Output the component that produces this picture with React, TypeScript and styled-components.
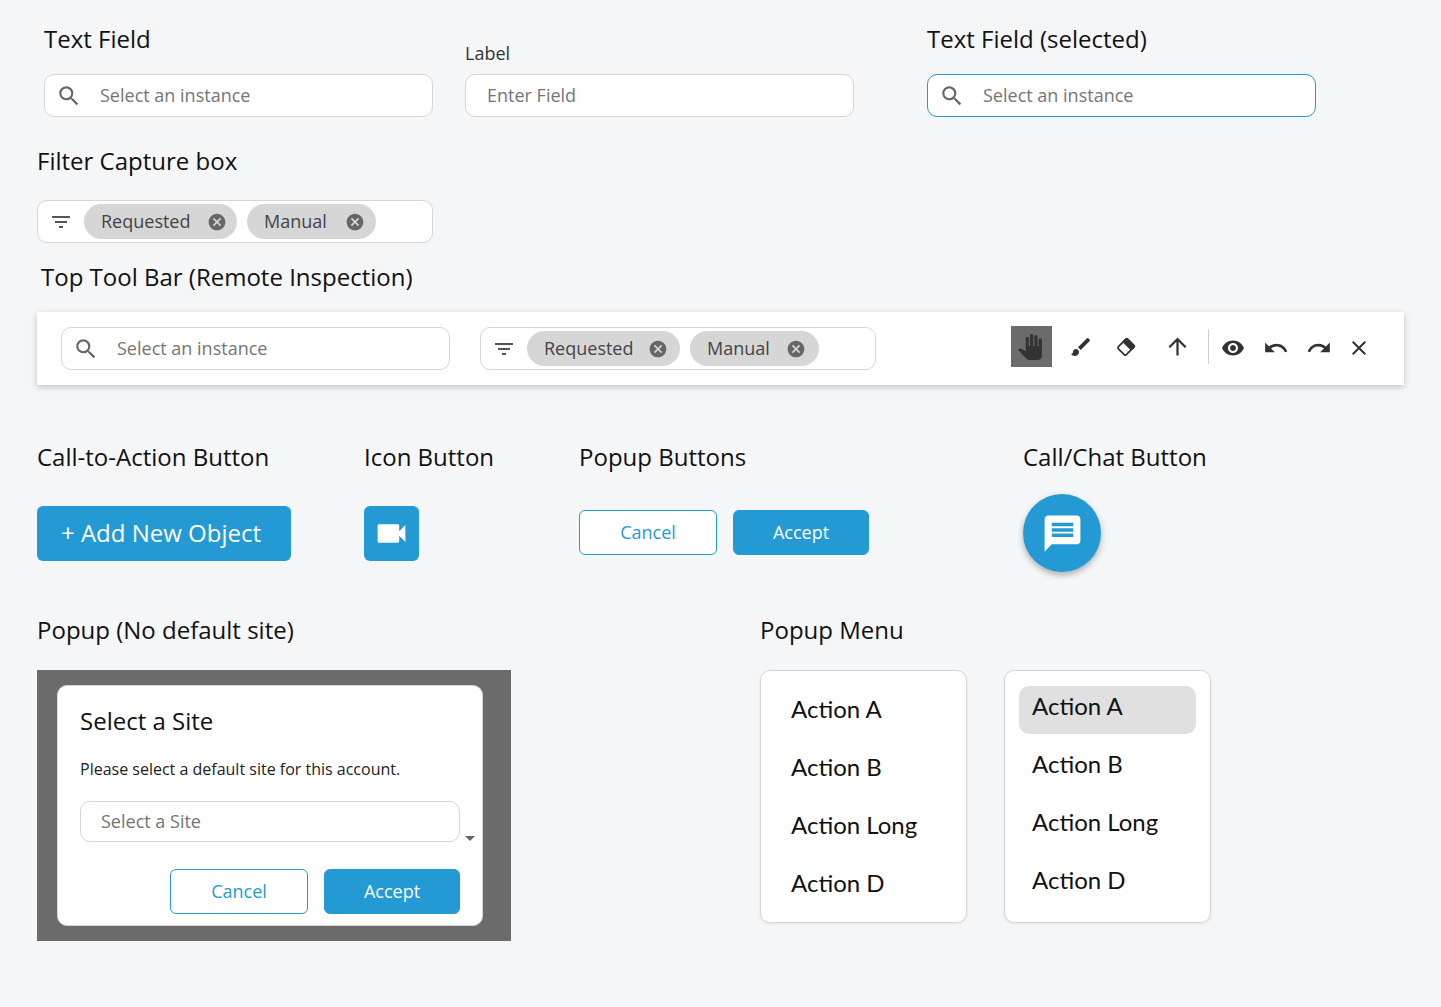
import React from 'react'
import styled, { createGlobalStyle } from 'styled-components'
import {
  MdArrowUpward,
  MdBrush,
  MdCancel,
  MdClose,
  MdFilterList,
  MdMessage,
  MdPanTool,
  MdRedo,
  MdSearch,
  MdUndo,
  MdVideocam,
  MdVisibility,
} from 'react-icons/md'

const BLUE = '#239ad3'

const GlobalStyle = createGlobalStyle`
  * { box-sizing: border-box; }
  html, body { margin: 0; background: #f5f6f8; }
  body { font-family: "Open Sans", "Liberation Sans", sans-serif; color: #111; }
`

const Page = styled.div`
  width: 1441px;
  height: 1007px;
  padding: 23px 37px 0;
  overflow: hidden;
`

const Heading = styled.div<{ $indent?: number }>`
  font-size: 24px;
  line-height: 32px;
  height: 32px;
  color: #111;
  white-space: nowrap;
  margin-left: ${p => p.$indent ?? 0}px;
`

const FieldRow = styled.div`
  display: grid;
  grid-template-columns: 389px 389px 389px;
  column-gap: 32px;
  margin-left: 7px;
  align-items: end;

  & > *:nth-child(3) {
    margin-left: 41px;
  }
`

const FieldColumn = styled.div`
  display: flex;
  flex-direction: column;
  gap: 19px;
`

const FieldLabel = styled.label`
  font-size: 18px;
  line-height: 24px;
  color: #333;
  margin-bottom: -10px;
`

const Field = styled.div<{ $selected?: boolean; $width?: number }>`
  display: flex;
  align-items: center;
  width: ${p => p.$width ?? 389}px;
  height: 43px;
  background: #fff;
  border: 1px solid ${p => (p.$selected ? BLUE : '#d6d6d6')};
  border-radius: 10px;
  flex-shrink: 0;
`

const SearchGlyph = styled(MdSearch)`
  color: #666;
  margin-left: 11px;
  flex-shrink: 0;
`

const Placeholder = styled.span<{ $inset?: number }>`
  font-size: 18px;
  color: #757575;
  margin-left: ${p => p.$inset ?? 18}px;
  padding-bottom: 2px;
  white-space: nowrap;
`

const SectionHeading = styled(Heading)<{ $top: number; $bottom: number }>`
  margin-top: ${p => p.$top}px;
  margin-bottom: ${p => p.$bottom}px;
`

const FilterBox = styled(Field)`
  width: 396px;
  gap: 10px;
  padding-left: 11px;
`

const FilterGlyph = styled(MdFilterList)`
  color: #555;
  margin-right: 1px;
  flex-shrink: 0;
`

const Chip = styled.div<{ $width: number; $inset: number }>`
  display: flex;
  align-items: center;
  justify-content: space-between;
  width: ${p => p.$width}px;
  height: 35px;
  padding: 0 ${p => p.$inset}px 0 17px;
  border-radius: 18px;
  background: #d6d6d6;
  font-size: 18px;
  color: #444;
`

const ChipLabel = styled.span`
  padding-bottom: 2px;
`

const ChipClose = styled(MdCancel)`
  color: #666;
`

const ToolBar = styled.div`
  display: flex;
  align-items: center;
  width: 1367px;
  height: 73px;
  padding-left: 24px;
  background: #fff;
  box-shadow: 0 2px 6px rgba(0, 0, 0, 0.22);
`

const ToolBarFilter = styled(FilterBox)`
  margin-left: 30px;
`

const Tools = styled.div`
  display: flex;
  align-items: center;
  height: 41px;
  margin-left: 135px;
  margin-top: -4px;
  color: #333;
`

const Tool = styled.div<{ $width: number; $active?: boolean; $before?: number; $drop?: boolean }>`
  display: flex;
  align-items: center;
  justify-content: center;
  width: ${p => p.$width}px;
  height: 41px;
  margin-left: ${p => p.$before ?? 0}px;
  padding-top: ${p => (p.$drop ? 2 : 0)}px;
  padding-right: ${p => (p.$active ? 3 : 0)}px;
  background: ${p => (p.$active ? '#6b6b6b' : 'transparent')};
`

const ToolDivider = styled.div`
  width: 1px;
  height: 35px;
  margin: 0 8px;
  background: #d0d0d0;
`

const ButtonRow = styled.div`
  display: grid;
  grid-template-columns: 327px 215px 444px auto;
  margin-top: 56px;
`

const ButtonColumn = styled.div`
  display: flex;
  flex-direction: column;
  gap: 21px;
`

const Controls = styled.div<{ $lift?: boolean }>`
  display: flex;
  align-items: center;
  gap: 16px;
  height: 78px;
  padding-bottom: ${p => (p.$lift ? 1 : 0)}px;
`

const AddButton = styled.button`
  width: 254px;
  height: 55px;
  padding: 0 6px 2px 0;
  border: 0;
  border-radius: 6px;
  background: ${BLUE};
  color: #fff;
  font: 400 24px "Open Sans", sans-serif;
`

const IconButton = styled.button`
  display: flex;
  align-items: center;
  justify-content: center;
  width: 55px;
  height: 55px;
  padding: 0;
  border: 0;
  border-radius: 6px;
  background: ${BLUE};
  color: #fff;
`

const PopupButton = styled.button<{ $primary?: boolean }>`
  width: ${p => (p.$primary ? 136 : 138)}px;
  height: 45px;
  padding: 0 0 2px;
  border: 1px solid ${BLUE};
  border-radius: 6px;
  background: ${p => (p.$primary ? BLUE : '#fff')};
  color: ${p => (p.$primary ? '#fff' : BLUE)};
  font: 400 18px "Open Sans", sans-serif;
`

const ChatButton = styled.button`
  display: flex;
  align-items: center;
  justify-content: center;
  width: 78px;
  height: 78px;
  padding: 0;
  border: 0;
  border-radius: 50%;
  background: ${BLUE};
  color: #fff;
  box-shadow: 0 3px 6px rgba(0, 0, 0, 0.3);
`

const BottomRow = styled.div`
  display: grid;
  grid-template-columns: 723px auto;
  margin-top: 42px;
`

const BottomColumn = styled.div`
  display: flex;
  flex-direction: column;
  gap: 24px;
`

const Backdrop = styled.div`
  width: 474px;
  height: 271px;
  padding: 15px 28px 15px 20px;
  background: #6b6b6b;
`

const Dialog = styled.div`
  height: 241px;
  padding: 19px 22px 0;
  background: #fff;
  border: 1px solid #d6d6d6;
  border-radius: 10px;
`

const DialogTitle = styled.div`
  font-size: 24px;
  line-height: 32px;
  color: #111;
`

const DialogText = styled.div`
  margin-top: 22px;
  font-size: 16px;
  line-height: 20px;
  color: #222;
`

const SelectRow = styled.div`
  display: flex;
  align-items: flex-end;
  margin-top: 22px;
`

const SelectField = styled(Field)`
  width: 380px;
  height: 41px;
`

const SelectCaret = styled.div`
  width: 0;
  height: 0;
  margin: 0 0 1px 5px;
  border-left: 5px solid transparent;
  border-right: 5px solid transparent;
  border-top: 5px solid #666;
`

const DialogActions = styled.div`
  display: flex;
  justify-content: flex-end;
  gap: 16px;
  width: 380px;
  margin-top: 27px;
`

const Menus = styled.div`
  display: flex;
  gap: 37px;
`

const Menu = styled.div<{ $raised?: boolean }>`
  display: flex;
  flex-direction: column;
  gap: 10px;
  width: 207px;
  height: 253px;
  padding: ${p => (p.$raised ? '15px 14px 0' : '18px 17px 0')};
  background: #fff;
  border: 1px solid #d6d6d6;
  border-radius: 10px;
  box-shadow: 0 1px 3px rgba(0, 0, 0, 0.08);
`

const MenuItem = styled.div<{ $active?: boolean }>`
  flex: 0 0 48px;
  padding-left: 13px;
  font-family: Lato, "Open Sans", sans-serif;
  font-size: 24px;
  line-height: 40px;
  color: #111;
  border-radius: 10px;
  background: ${p => (p.$active ? '#e0e0e0' : 'transparent')};
`

const EraserIcon = () => (
  <svg width="24" height="24" viewBox="0 0 24 24">
    <g transform="rotate(45 12 12)">
      <rect x="6.4" y="5.4" width="11.2" height="13.2" rx="1.5" fill="#fff" stroke="currentColor" strokeWidth="1.8" />
      <rect x="5.5" y="4.5" width="13" height="6.5" rx="1.5" fill="currentColor" />
    </g>
  </svg>
)

const SearchField = ({ selected }: { selected?: boolean }) => (
  <Field $selected={selected}>
    <SearchGlyph size={26} />
    <Placeholder>Select an instance</Placeholder>
  </Field>
)

const FilterChips = ({ extra = 0 }: { extra?: number }) => (
  <>
    <FilterGlyph size={24} />
    <Chip $width={153} $inset={10 + extra}>
      <ChipLabel>Requested</ChipLabel>
      <ChipClose size={20} />
    </Chip>
    <Chip $width={129} $inset={11 + extra}>
      <ChipLabel>Manual</ChipLabel>
      <ChipClose size={20} />
    </Chip>
  </>
)

const menuActions = ['Action A', 'Action B', 'Action Long', 'Action D']

const App: React.FC = () => (
  <Page>
    <GlobalStyle />
    <FieldRow>
      <FieldColumn>
        <Heading>Text Field</Heading>
        <SearchField />
      </FieldColumn>
      <FieldColumn>
        <FieldLabel>Label</FieldLabel>
        <Field>
          <Placeholder $inset={21}>Enter Field</Placeholder>
        </Field>
      </FieldColumn>
      <FieldColumn>
        <Heading>Text Field (selected)</Heading>
        <SearchField selected />
      </FieldColumn>
    </FieldRow>

    <SectionHeading $top={28} $bottom={23}>Filter Capture box</SectionHeading>
    <FilterBox>
      <FilterChips />
    </FilterBox>

    <SectionHeading $indent={4} $top={18} $bottom={19}>Top Tool Bar (Remote Inspection)</SectionHeading>
    <ToolBar>
      <SearchField />
      <ToolBarFilter>
        <FilterChips extra={2} />
      </ToolBarFilter>
      <Tools>
        <Tool $width={41} $active><MdPanTool size={26} /></Tool>
        <Tool $width={58}><MdBrush size={24} /></Tool>
        <Tool $width={32}><EraserIcon /></Tool>
        <Tool $width={46} $before={12}><MdArrowUpward size={27} /></Tool>
        <ToolDivider />
        <Tool $width={32} $drop><MdVisibility size={24} /></Tool>
        <Tool $width={54} $drop><MdUndo size={26} /></Tool>
        <Tool $width={32} $drop><MdRedo size={26} /></Tool>
        <Tool $width={48} $drop><MdClose size={24} /></Tool>
      </Tools>
    </ToolBar>

    <ButtonRow>
      <ButtonColumn>
        <Heading>Call-to-Action Button</Heading>
        <Controls>
          <AddButton>+ Add New Object</AddButton>
        </Controls>
      </ButtonColumn>
      <ButtonColumn>
        <Heading>Icon Button</Heading>
        <Controls>
          <IconButton><MdVideocam size={37} /></IconButton>
        </Controls>
      </ButtonColumn>
      <ButtonColumn>
        <Heading>Popup Buttons</Heading>
        <Controls $lift>
          <PopupButton>Cancel</PopupButton>
          <PopupButton $primary>Accept</PopupButton>
        </Controls>
      </ButtonColumn>
      <ButtonColumn>
        <Heading>Call/Chat Button</Heading>
        <Controls>
          <ChatButton><MdMessage size={43} /></ChatButton>
        </Controls>
      </ButtonColumn>
    </ButtonRow>

    <BottomRow>
      <BottomColumn>
        <Heading>Popup (No default site)</Heading>
        <Backdrop>
          <Dialog>
            <DialogTitle>Select a Site</DialogTitle>
            <DialogText>Please select a default site for this account.</DialogText>
            <SelectRow>
              <SelectField>
                <Placeholder $inset={20}>Select a Site</Placeholder>
              </SelectField>
              <SelectCaret />
            </SelectRow>
            <DialogActions>
              <PopupButton>Cancel</PopupButton>
              <PopupButton $primary>Accept</PopupButton>
            </DialogActions>
          </Dialog>
        </Backdrop>
      </BottomColumn>
      <BottomColumn>
        <Heading>Popup Menu</Heading>
        <Menus>
          <Menu>
            {menuActions.map(action => (
              <MenuItem key={action}>{action}</MenuItem>
            ))}
          </Menu>
          <Menu $raised>
            {menuActions.map((action, i) => (
              <MenuItem key={action} $active={i === 0}>{action}</MenuItem>
            ))}
          </Menu>
        </Menus>
      </BottomColumn>
    </BottomRow>
  </Page>
)

export default App
